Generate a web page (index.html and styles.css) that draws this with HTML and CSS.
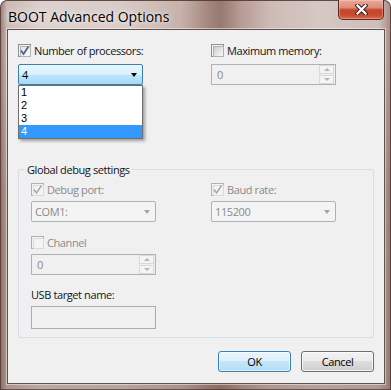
FILE: index.html
```html
<!DOCTYPE html>
<html>
<head>
<meta charset="utf-8">
<title>BOOT Advanced Options</title>
<link rel="stylesheet" href="styles.css">
</head>
<body>
<div class="window">
  <div class="titlebar">
    <span class="title">BOOT Advanced Options</span>
    <span class="close">
      <svg width="13" height="11" viewBox="0 0 13 11"><path d="M2.5 1.5 L10.5 9.5 M10.5 1.5 L2.5 9.5" stroke="#3b2420" stroke-width="4.2" stroke-linecap="square" fill="none"/><path d="M2.5 1.5 L10.5 9.5 M10.5 1.5 L2.5 9.5" stroke="#ffffff" stroke-width="2.2" stroke-linecap="square" fill="none"/></svg>
    </span>
  </div>
  <div class="client">
    <div class="pair top">
      <div class="col">
        <label class="check"><span class="cb checked"><svg width="11" height="11" viewBox="0 0 11 11"><path d="M2 5.5 L4.5 9 L9.5 1.5" fill="none" stroke="#4d6185" stroke-width="1.7"/></svg></span>Number of processors:</label>
        <div class="combo-wrap">
          <div class="combo active"><span>4</span><span class="arrow"></span></div>
          <ul class="droplist">
            <li>1</li>
            <li>2</li>
            <li>3</li>
            <li class="sel">4</li>
          </ul>
        </div>
      </div>
      <div class="col">
        <label class="check"><span class="cb"></span>Maximum memory:</label>
        <div class="spin"><span class="val">0</span><span class="spin-btns"><span class="sb up"></span><span class="sb down"></span></span></div>
      </div>
    </div>

    <fieldset class="group">
      <legend>Global debug settings</legend>
      <div class="pair">
        <div class="col tight">
          <label class="check dis"><span class="cb checked disabled"><svg width="11" height="11" viewBox="0 0 11 11"><path d="M2 5.5 L4.5 9 L9.5 1.5" fill="none" stroke="#a9a9a9" stroke-width="1.5"/></svg></span>Debug port:</label>
          <div class="combo disabled"><span>COM1:</span><span class="arrow"></span></div>
        </div>
        <div class="col tight">
          <label class="check dis"><span class="cb checked disabled"><svg width="11" height="11" viewBox="0 0 11 11"><path d="M2 5.5 L4.5 9 L9.5 1.5" fill="none" stroke="#a9a9a9" stroke-width="1.5"/></svg></span>Baud rate:</label>
          <div class="combo disabled"><span>115200</span><span class="arrow"></span></div>
        </div>
      </div>
      <div class="col tight channel">
        <label class="check dis"><span class="cb disabled"></span>Channel</label>
        <div class="spin"><span class="val">0</span><span class="spin-btns"><span class="sb up"></span><span class="sb down"></span></span></div>
      </div>
      <div class="usb-label">USB target name:</div>
      <div class="textbox"></div>
    </fieldset>

    <div class="buttons">
      <button class="btn default">OK</button>
      <button class="btn">Cancel</button>
    </div>
  </div>
</div>
</body>
</html>
```

FILE: styles.css
```css
* { box-sizing: border-box; }
html, body { margin: 0; padding: 0; }
body {
  width: 391px;
  height: 390px;
  overflow: hidden;
  background: #ffffff;
  font-family: "Open Sans", "Noto Sans", sans-serif;
  font-size: 11px;
  letter-spacing: -0.4px;
  color: #11151d;
}

.window {
  width: 391px;
  height: 390px;
  display: flex;
  flex-direction: column;
  border: 1px solid rgba(70, 45, 40, 0.75);
  border-radius: 7px 7px 0 0;
  padding: 0 5px 5px 6px;
  background:
    linear-gradient(to bottom, rgba(110, 80, 70, 0) 0, rgba(110, 80, 70, 0) 60px, rgba(110, 80, 70, 0.28) 200px, rgba(110, 80, 70, 0.32) 100%),
    linear-gradient(to right, #9f8279 0, #cbb9b4 6px, #ddd1ce 40px, #d9cbc7 120px, #c7b1aa 180px, #a3867e 208px, #98796f 220px, #b69c95 240px, #cdbab5 268px, #d6c8c4 320px, #cebdb8 378px, #a2867e 391px);
}

.titlebar {
  height: 28px;
  display: flex;
  align-items: flex-start;
}
.title {
  padding: 6px 0 0 1px;
  font-size: 14px;
  line-height: 19px;
  letter-spacing: 0;
  color: #000;
  text-shadow: 0 0 8px rgba(255, 255, 255, 0.9), 0 0 3px rgba(255, 255, 255, 0.7);
}
.close {
  margin: -1px 1px 0 auto;
  width: 46px;
  height: 20px;
  display: flex;
  align-items: center;
  justify-content: center;
  border: 1px solid #5a2a22;
  border-top: none;
  border-radius: 0 0 5px 5px;
  background: linear-gradient(to bottom, #e8ab9c 0, #dd8b78 40%, #c6452c 52%, #c84a30 78%, #db6a4e 100%);
  box-shadow: inset 0 0 0 1px rgba(255, 220, 210, 0.35);
}

.client {
  flex: 1;
  display: flex;
  flex-direction: column;
  border: 1px solid #5f514d;
  background: #f0f0f0;
  padding: 14px 10px 0 10px;
  box-shadow: 0 0 0 1px rgba(255, 255, 255, 0.45);
}

.pair {
  display: grid;
  grid-template-columns: 125px 125px;
  column-gap: 68px;
}
.group .pair { column-gap: 55px; }

.col {
  display: flex;
  flex-direction: column;
  gap: 7px;
}
.col.tight { gap: 5px; }

.check {
  display: flex;
  align-items: center;
  gap: 3px;
  height: 13px;
  line-height: 13px;
  white-space: nowrap;
}
.check.dis { color: #8a8a8a; }

.cb {
  position: relative;
  flex: none;
  width: 13px;
  height: 13px;
  border: 1px solid #8e8f8f;
  background: #f4f4f4;
  padding: 1px;
}
.cb::before {
  content: "";
  display: block;
  width: 9px;
  height: 9px;
  border: 1px solid #aeb3b9;
  background: linear-gradient(135deg, #c9cdd3 0%, #e6e8eb 60%, #f7f7f7 100%);
}
.cb.checked::before {
  background: linear-gradient(135deg, #e2e5e8 0%, #f6f6f6 100%);
}
.cb.disabled { border-color: #b1b1b1; }
.cb.disabled::before { border-color: #dadada; background: #f4f4f4; }
.cb svg { position: absolute; left: 0; top: 0; }

.combo-wrap { position: relative; }
.combo {
  height: 21px;
  display: flex;
  align-items: center;
  justify-content: space-between;
  padding: 0 5px 0 3px;
  border-radius: 2px;
}
.combo.active {
  border: 1px solid #3c7fb1;
  background: linear-gradient(to bottom, #eaf6fd 0, #d9f0fc 50%, #bee6fd 50%, #a7d9f5 100%);
  color: #000;
}
.combo.disabled {
  border: 1px solid #adb2b5;
  background: #f4f4f4;
  color: #8a8a8a;
}
.arrow {
  width: 0;
  height: 0;
  border-left: 3.5px solid transparent;
  border-right: 3.5px solid transparent;
  border-top: 4px solid #000;
}
.combo.disabled .arrow { border-top-color: #a4a4a4; }

.droplist {
  position: absolute;
  top: 100%;
  left: 0;
  width: 125px;
  margin: 0;
  padding: 0;
  list-style: none;
  background: #ffffff;
  border: 1px solid #6f6f6f;
  box-shadow: 2px 2px 3px rgba(0, 0, 0, 0.35);
  font-family: "Liberation Sans", Arial, sans-serif;
  letter-spacing: 0;
}
.droplist li {
  height: 13px;
  line-height: 13px;
  padding-left: 2px;
  color: #000;
}
.droplist li.sel {
  background: #3399ff;
  color: #ffffff;
}

.spin {
  height: 21px;
  display: flex;
  align-items: center;
  justify-content: space-between;
  padding: 0 1px 0 5px;
  border: 1px solid #afb2b5;
  background: #f0f0f0;
  color: #8a8a8a;
}
.spin-btns {
  display: flex;
  flex-direction: column;
  gap: 1px;
  width: 15px;
  height: 19px;
}
.sb {
  flex: 1;
  display: flex;
  align-items: center;
  justify-content: center;
  border: 1px solid #d9d9d9;
  background: #f4f4f4;
}
.sb::before {
  content: "";
  width: 0;
  height: 0;
  border-left: 3px solid transparent;
  border-right: 3px solid transparent;
}
.sb.up::before { border-bottom: 3px solid #b5b5b5; }
.sb.down::before { border-top: 3px solid #b5b5b5; }

.group {
  margin: 77px 0 0 0;
  width: 356px;
  min-width: 0;
  border: 1px solid #d5dfe5;
  border-radius: 3px;
  padding: 6px 12px 8px 12px;
}
.group legend {
  padding: 0 2px;
  margin-left: -6px;
  line-height: 15px;
}
.channel { margin-top: 14px; width: 125px; }
.usb-label {
  margin-top: 12px;
  line-height: 15px;
}
.textbox {
  margin-top: 4px;
  width: 125px;
  height: 23px;
  border: 1px solid #adadad;
  background: #f0f0f0;
}

.buttons {
  display: flex;
  justify-content: flex-end;
  gap: 10px;
  margin-top: 13px;
}
.btn {
  width: 73px;
  height: 21px;
  padding: 0;
  font-family: inherit;
  font-size: 11px;
  letter-spacing: -0.4px;
  color: #000;
  border: 1px solid #707070;
  border-radius: 3px;
  background: linear-gradient(to bottom, #f2f2f2 0, #ebebeb 50%, #dddddd 50%, #cfcfcf 100%);
  box-shadow: inset 0 0 0 1px rgba(255, 255, 255, 0.7);
}
.btn.default {
  border-color: #3c7fb1;
  background: linear-gradient(to bottom, #e9f5fc 0, #daf0fc 50%, #c4e6f8 50%, #b2dcf3 100%);
  box-shadow: inset 0 0 0 1px rgba(255, 255, 255, 0.6);
}
```
